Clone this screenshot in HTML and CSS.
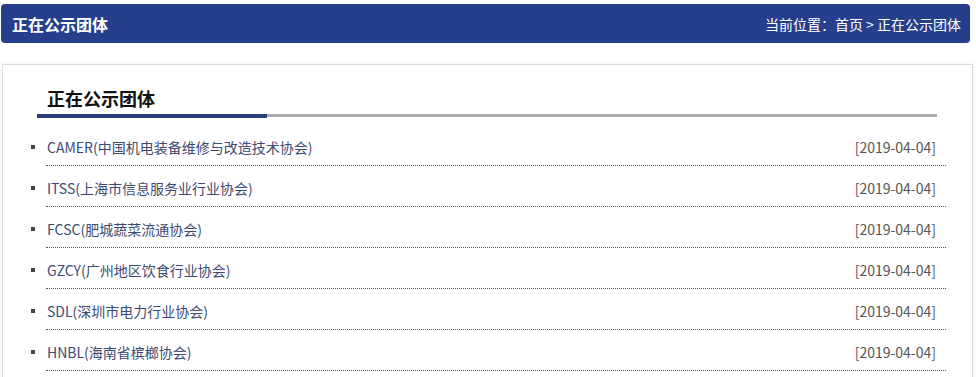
FILE: index.html
```html
<!DOCTYPE html>
<html lang="zh-CN">
<head>
  <meta charset="UTF-8">
  <title>正在公示团体</title>
  <link rel="stylesheet" href="styles.css">
</head>
<body>

  <!-- Top bar with breadcrumb -->
  <div class="topbar">
    <div class="topbar-title">正在公示团体</div>
    <div class="crumb">当前位置：首页 &gt; 正在公示团体</div>
  </div>

  <!-- List panel -->
  <div class="panel">
    <div class="panel-head">
      <h2>正在公示团体</h2>
    </div>
    <ul class="news-list">
      <li><a href="#">CAMER(中国机电装备维修与改造技术协会)</a><span class="date">[2019-04-04]</span></li>
      <li><a href="#">ITSS(上海市信息服务业行业协会)</a><span class="date">[2019-04-04]</span></li>
      <li><a href="#">FCSC(肥城蔬菜流通协会)</a><span class="date">[2019-04-04]</span></li>
      <li><a href="#">GZCY(广州地区饮食行业协会)</a><span class="date">[2019-04-04]</span></li>
      <li><a href="#">SDL(深圳市电力行业协会)</a><span class="date">[2019-04-04]</span></li>
      <li><a href="#">HNBL(海南省槟榔协会)</a><span class="date">[2019-04-04]</span></li>
    </ul>
  </div>

</body>
</html>
```

FILE: styles.css
```css
body {
  margin: 0;
  background: #fff;
  font-family: "Noto Sans CJK SC", "Noto Sans", sans-serif;
  font-size: 14px;
  color: #333;
}

.topbar {
  display: flex;
  justify-content: space-between;
  align-items: center;
  height: 39px;
  margin: 4px 6px 0 1px;
  padding: 0 9px 0 11px;
  background: #263f8c;
  border-radius: 4px;
  color: #fff;
}

.topbar-title {
  font-size: 16px;
  font-weight: bold;
}

.crumb {
  font-size: 14px;
}

.panel {
  margin: 21px 3px 0 2px;
  border: 1px solid #dcdcdc;
  box-shadow: 0 0 4px rgba(0, 0, 0, 0.08);
  padding: 21px 0 0 34px;
  height: 320px;
}

.panel-head {
  width: 900px;
  border-bottom: 3px solid #ababab;
}

.panel-head h2 {
  display: inline-block;
  width: 210px;
  margin: 0 0 -4px 0;
  padding: 0 10px 4px;
  font-size: 18px;
  font-weight: bold;
  color: #111;
  line-height: 24px;
  border-bottom: 4px solid #2a3f7c;
}

.news-list {
  list-style: none;
  margin: 8px 0 0 9px;
  padding: 0;
  width: 900px;
}

.news-list li {
  position: relative;
  display: flex;
  justify-content: space-between;
  height: 36px;
  line-height: 36px;
  padding: 4px 10px 0 1px;
  border-bottom: 1px dotted #555;
}

.news-list li::before {
  content: "";
  position: absolute;
  left: -15px;
  top: 20px;
  width: 4px;
  height: 4px;
  background: #444;
}

.news-list a {
  color: #3c4a72;
  text-decoration: none;
}

.date {
  color: #555;
}
```
